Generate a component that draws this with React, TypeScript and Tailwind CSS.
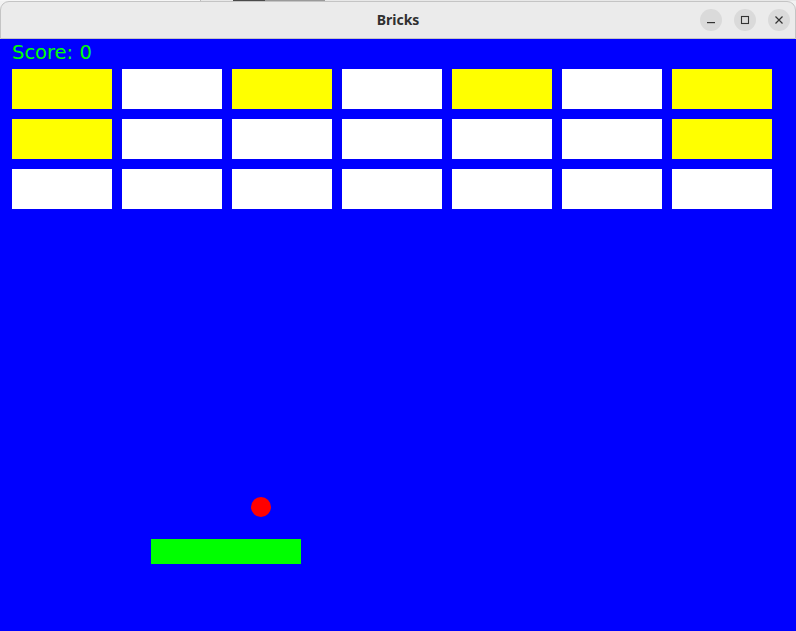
import React from "react";

const rows: string[][] = [
  ["y", "w", "y", "w", "y", "w", "y"],
  ["y", "w", "w", "w", "w", "w", "y"],
  ["w", "w", "w", "w", "w", "w", "w"],
];

export default function App() {
  return (
    <div className="w-[796px] h-[631px] overflow-hidden flex flex-col bg-[#f2f2f2] relative">
      {/* background strip */}
      <div className="h-[1px] flex shrink-0">
        <div className="w-[200px] bg-[#f6f6f6]" />
        <div className="w-[1px] bg-[#bdbdbd]" />
        <div className="w-[32px] bg-[#e8e8e8]" />
        <div className="w-[32px] bg-[#4a4a4a]" />
        <div className="w-[60px] bg-[#9a9a9a]" />
        <div className="flex-1 bg-[#e8e8e8]" />
      </div>
      {/* window */}
      <div className="flex-1 flex flex-col">
        <div className="h-[38px] shrink-0 relative flex items-center justify-center bg-[#ebebeb] border-t border-l border-r border-b border-[#c4c4c4] rounded-t-[9px]">
          <span
            className="text-[14px] font-bold text-[#303030] leading-none"
            style={{ fontFamily: '"Noto Sans", "DejaVu Sans", sans-serif' }}
          >
            Bricks
          </span>
          <div className="absolute right-[5px] top-[7px] flex gap-[12px]">
            <div className="w-[22px] h-[22px] rounded-full bg-[#dadada] flex items-center justify-center">
              <svg width="10" height="10" viewBox="0 0 10 10">
                <rect x="1" y="7" width="8" height="1.2" fill="#333" />
              </svg>
            </div>
            <div className="w-[22px] h-[22px] rounded-full bg-[#dadada] flex items-center justify-center">
              <svg width="10" height="10" viewBox="0 0 10 10">
                <rect x="1.5" y="1.5" width="7" height="7" fill="none" stroke="#333" strokeWidth="1.1" />
              </svg>
            </div>
            <div className="w-[22px] h-[22px] rounded-full bg-[#dadada] flex items-center justify-center">
              <svg width="10" height="10" viewBox="0 0 10 10">
                <path d="M1.5 1.5 L8.5 8.5 M8.5 1.5 L1.5 8.5" stroke="#333" strokeWidth="1.2" />
              </svg>
            </div>
          </div>
        </div>
        <div className="flex-1 bg-[#0000ff] relative pl-[12px] pt-[4px]">
          <div
            className="text-[19.5px] leading-[20px] text-[#00ff00]"
            style={{ fontFamily: '"DejaVu Sans", sans-serif' }}
          >
            Score: 0
          </div>
          <div className="mt-[6px] flex flex-col gap-[10px]">
            {rows.map((row, i) => (
              <div key={i} className="flex gap-[10px]">
                {row.map((c, j) => (
                  <div
                    key={j}
                    className={
                      c === "y"
                        ? "w-[100px] h-[40px] bg-[#ffff00]"
                        : "w-[100px] h-[40px] bg-[#ffffff]"
                    }
                  />
                ))}
              </div>
            ))}
          </div>
          {/* ball */}
          <div className="absolute left-[251px] top-[458px] w-[20px] h-[20px] rounded-full bg-[#ff0000]" />
          {/* paddle */}
          <div className="absolute left-[151px] top-[500px] w-[150px] h-[25px] bg-[#00ff00]" />
        </div>
      </div>
    </div>
  );
}
